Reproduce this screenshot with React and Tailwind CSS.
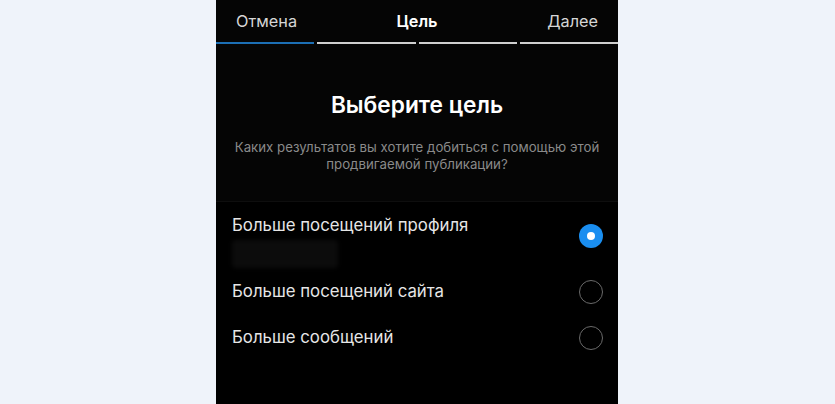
export default function App() {
  return (
    <div className="w-[835px] h-[404px] bg-[#eff3fa] flex" style={{ fontFamily: 'Inter, "Noto Sans", sans-serif' }}>
      <div className="w-[402px] h-full bg-[#050505] flex flex-col ml-[216px]">
        <div className="h-[42px] flex items-center px-5 pt-[1px] text-[16.3px]">
          <span className="flex-1 text-left text-[#d6d6d6]">Отмена</span>
          <span className="flex-1 text-center text-white font-semibold">Цель</span>
          <span className="flex-1 text-right text-[#d6d6d6]">Далее</span>
        </div>
        <div className="flex gap-[3px] h-[2px]">
          <div className="flex-1 bg-[#1c6fb5]"></div>
          <div className="flex-1 bg-[#cfcfcf]"></div>
          <div className="flex-1 bg-[#cfcfcf]"></div>
          <div className="flex-1 bg-[#cfcfcf]"></div>
        </div>
        <div className="flex flex-col items-center pt-[47px] h-[158px] border-b border-[#0e0e0e]">
          <h1 className="text-white text-[22.7px] font-semibold leading-[28px]">Выберите цель</h1>
          <p className="text-[#8a8a8a] text-[13.25px] leading-[17px] text-center mt-[20px] px-2">
            Каких результатов вы хотите добиться с помощью этой<br />продвигаемой публикации?
          </p>
        </div>
        <div className="flex flex-col bg-black flex-1 px-4">
          <div className="flex items-start justify-between pt-[12px] pb-[1px]">
            <div className="flex flex-col">
              <span className="text-[#e6e6e6] text-[16.8px] leading-[22px]">Больше посещений профиля</span>
              <div className="w-[106px] h-[28px] bg-[#0c0c0c] rounded-sm mt-[4px] blur-[2px]"></div>
            </div>
            <div className="w-[24px] h-[24px] rounded-full bg-[#1a8ef0] flex items-center justify-center mr-[-1px] mt-[10px]">
              <div className="w-[8px] h-[8px] rounded-full bg-white"></div>
            </div>
          </div>
          <div className="flex items-center justify-between h-[46px]">
            <span className="text-[#e6e6e6] text-[16.8px]">Больше посещений сайта</span>
            <div className="w-[24px] h-[24px] rounded-full border-[1.5px] border-[#6a6a6a] mr-[-1px]"></div>
          </div>
          <div className="flex items-center justify-between h-[46px]">
            <span className="text-[#e6e6e6] text-[16.8px]">Больше сообщений</span>
            <div className="w-[24px] h-[24px] rounded-full border-[1.5px] border-[#6a6a6a] mr-[-1px]"></div>
          </div>
        </div>
      </div>
    </div>
  );
}
